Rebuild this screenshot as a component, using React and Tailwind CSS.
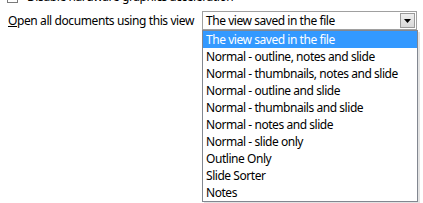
import React from "react"

const views = [
  "The view saved in the file",
  "Normal - outline, notes and slide",
  "Normal - thumbnails, notes and slide",
  "Normal - outline and slide",
  "Normal - thumbnails and slide",
  "Normal - notes and slide",
  "Normal - slide only",
  "Outline Only",
  "Slide Sorter",
  "Notes",
]

const App = () => {
  return (
    <div className="w-[423px] h-[203px] bg-white overflow-hidden font-['Noto_Sans',sans-serif] text-[12px] text-black leading-[16px]">
      {/* checkbox row, mostly scrolled off the top */}
      <div className="flex items-center gap-[9px] pl-[7px] -mt-[11px] h-[16px] tracking-[-0.4px]">
        <div className="w-[11px] h-[11px] border border-[#7a7a7a] bg-white mt-[1px]" />
        <span>
          Disable hardware <span className="underline">g</span>raphics acceleration
        </span>
      </div>

      <div className="flex items-start pl-[8px] mt-[6px]">
        <label className="w-[194px] pt-[2px] tracking-[-0.4px]">
          <span className="underline">O</span>pen all documents using this view
        </label>

        <div className="relative">
          <div className="w-[215px] h-[19px] border border-[#a0a0a0] flex items-center justify-between pl-[3px] pr-[1px]">
            <span className="tracking-[-0.45px]">The view saved in the file</span>
            <div className="w-[15px] h-[15px] border border-[#9a9a9a] bg-gradient-to-b from-[#eeeeee] to-[#d8d8d8] flex items-center justify-center">
              <svg width="7" height="4" viewBox="0 0 7 4">
                <path d="M0 0 L7 0 L3.5 4 Z" fill="#000" />
              </svg>
            </div>
          </div>

          <ul className="absolute left-0 top-[19px] w-[216px] border border-[#828790] bg-white shadow-[2px_2px_0_0_#e3e3e3]">
            {views.map((v, i) => (
              <li
                key={v}
                className={
                  i === 0
                    ? "h-[17px] pl-[3px] flex items-center bg-[#3399ff] text-white tracking-[-0.45px]"
                    : "h-[17px] pl-[3px] flex items-center tracking-[-0.45px]"
                }
              >
                {v}
              </li>
            ))}
          </ul>
        </div>
      </div>
    </div>
  )
}

export default App
